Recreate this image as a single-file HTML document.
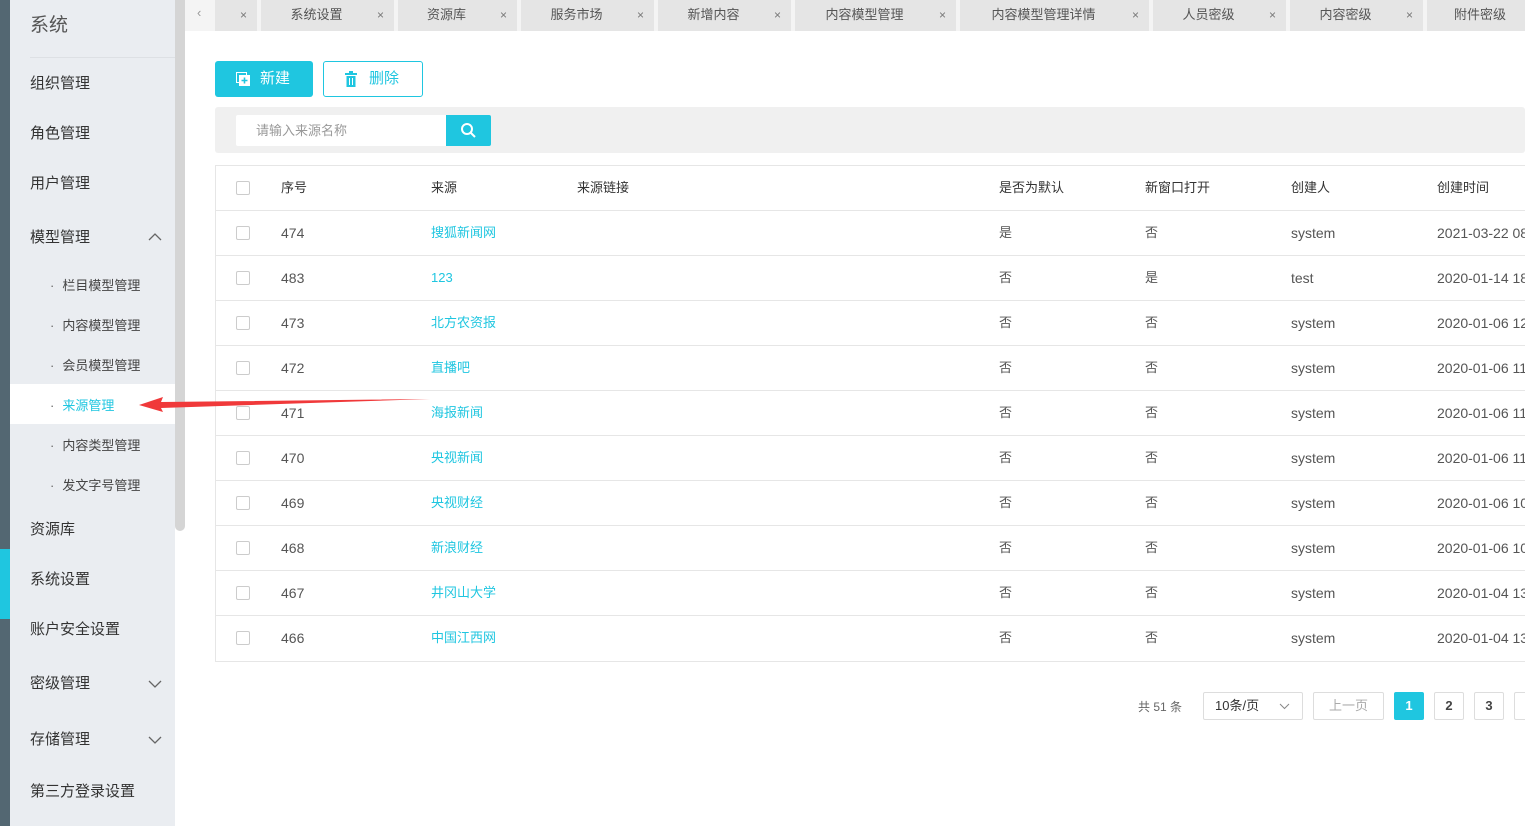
<!DOCTYPE html>
<html><head><meta charset="utf-8"><style>
*{margin:0;padding:0;box-sizing:border-box}
body{width:1525px;height:826px;overflow:hidden;background:#fff;font-family:"Liberation Sans","Noto Sans CJK SC",sans-serif;position:relative;color:#333}
.abs{position:absolute}
.side{left:0;top:0;width:10px;height:826px;background:#536772}
.panel{left:10px;top:0;width:165px;height:826px;background:#eaedf1}
.thumb{left:175px;top:0;width:10px;height:531px;background:#d5d5d5;border-radius:0 0 5px 5px}
.mi{position:absolute;left:30px;font-size:15px;color:#333}
.sub{position:absolute;left:50px;font-size:13px;color:#444}
.sub:before{content:"·";margin-right:8px;color:#666}
.tabs{left:185px;top:0;width:1340px;height:31px;background:#f4f4f4}
.tab{position:absolute;top:0;height:31px;background:#e5e5e5;font-size:13px;color:#555;line-height:30px;text-align:center}
.tab .x{position:absolute;right:10px;top:0;font-size:12px;color:#777}
.btn{position:absolute;top:61px;height:36px;border-radius:3px;font-size:15px;line-height:34px}
.th,.td{position:absolute;font-size:13px;height:20px;line-height:20px;white-space:nowrap}
.td{font-size:14px}
.cb{position:absolute;left:236px;width:14px;height:14px;border:1px solid #ccc;border-radius:2px;background:#fff}
.pg{position:absolute;top:692px;height:28px;border:1px solid #ddd;border-radius:2px;font-size:13px;text-align:center;line-height:26px}
</style></head><body>
<div class="abs side"></div>
<div class="abs" style="left:0;top:549px;width:10px;height:70px;background:#1fc6e0"></div>
<div class="abs panel"></div>
<div class="abs" style="left:30px;top:57px;width:145px;height:1px;background:#dde0e4"></div>
<div class="abs" style="left:10px;top:384px;width:165px;height:40px;background:#fff"></div>
<div class="abs thumb"></div>
<div class="mi" style="top:10px;font-size:19px;color:#555">系统</div>
<div class="mi" style="top:72px">组织管理</div>
<div class="mi" style="top:122px">角色管理</div>
<div class="mi" style="top:172px">用户管理</div>
<div class="mi" style="top:226px">模型管理</div>
<svg class="abs" style="left:148px;top:232px" width="14" height="9"><path d="M1 8L7 2L13 8" fill="none" stroke="#666" stroke-width="1.3"/></svg>
<div class="sub" style="top:275px">栏目模型管理</div>
<div class="sub" style="top:315px">内容模型管理</div>
<div class="sub" style="top:355px">会员模型管理</div>
<div class="sub" style="top:395px;color:#1fc6e0">来源管理</div>
<div class="sub" style="top:435px">内容类型管理</div>
<div class="sub" style="top:475px">发文字号管理</div>
<div class="mi" style="top:518px">资源库</div>
<div class="mi" style="top:568px">系统设置</div>
<div class="mi" style="top:618px">账户安全设置</div>
<div class="mi" style="top:672px">密级管理</div>
<svg class="abs" style="left:148px;top:680px" width="14" height="9"><path d="M1 1L7 7L13 1" fill="none" stroke="#666" stroke-width="1.3"/></svg>
<div class="mi" style="top:728px">存储管理</div>
<svg class="abs" style="left:148px;top:736px" width="14" height="9"><path d="M1 1L7 7L13 1" fill="none" stroke="#666" stroke-width="1.3"/></svg>
<div class="mi" style="top:780px">第三方登录设置</div>

<div class="abs tabs"></div>
<div class="abs" style="left:197px;top:5px;font-size:13px;color:#999">‹</div>
<div class="tab" style="left:215px;width:42px"><span class="x">×</span></div>
<div class="tab" style="left:261px;width:133px;padding-right:22px">系统设置<span class="x">×</span></div>
<div class="tab" style="left:398px;width:119px;padding-right:22px">资源库<span class="x">×</span></div>
<div class="tab" style="left:521px;width:133px;padding-right:22px">服务市场<span class="x">×</span></div>
<div class="tab" style="left:658px;width:133px;padding-right:22px">新增内容<span class="x">×</span></div>
<div class="tab" style="left:795px;width:161px;padding-right:22px">内容模型管理<span class="x">×</span></div>
<div class="tab" style="left:960px;width:189px;padding-right:22px">内容模型管理详情<span class="x">×</span></div>
<div class="tab" style="left:1153px;width:133px;padding-right:22px">人员密级<span class="x">×</span></div>
<div class="tab" style="left:1290px;width:133px;padding-right:22px">内容密级<span class="x">×</span></div>
<div class="tab" style="left:1427px;width:120px;text-align:left;padding-left:27px">附件密级</div>

<div class="btn" style="left:215px;width:98px;background:#1fc6e0;color:#fff;padding-left:45px;line-height:36px">新建</div>
<svg class="abs" style="left:236px;top:72px" width="14" height="14"><rect x="0.5" y="0.5" width="10" height="10" fill="none" stroke="#fff"/><rect x="3" y="3" width="11" height="11" fill="#fff"/><path d="M8.5 5.5v6M5.5 8.5h6" stroke="#1fc6e0" stroke-width="1.6"/></svg>
<div class="btn" style="left:323px;width:100px;border:1px solid #1fc6e0;color:#1fc6e0;padding-left:45px">删除</div>
<svg class="abs" style="left:345px;top:71px" width="12" height="16"><rect x="0" y="2" width="12" height="2" fill="#1fc6e0"/><rect x="4" y="0" width="4" height="2" fill="#1fc6e0"/><rect x="1.5" y="5" width="9" height="11" fill="#1fc6e0"/><path d="M4.5 7v7M7.5 7v7" stroke="#fff"/></svg>

<div class="abs" style="left:215px;top:107px;width:1310px;height:46px;background:#f0f0f0;border-radius:3px"></div>
<div class="abs" style="left:236px;top:115px;width:210px;height:31px;background:#fff;font-size:13px;color:#999;line-height:31px;padding-left:20px;border-radius:2px 0 0 2px">请输入来源名称</div>
<div class="abs" style="left:446px;top:115px;width:45px;height:31px;background:#1fc6e0;border-radius:0 2px 2px 0"></div>
<svg class="abs" style="left:460px;top:122px" width="17" height="17"><circle cx="7" cy="7" r="5" fill="none" stroke="#fff" stroke-width="2"/><path d="M10.5 10.5L15 15" stroke="#fff" stroke-width="2"/></svg>

<div class="abs" style="left:215px;top:165px;width:1320px;height:497px;border:1px solid #e6e6e6"></div>
<div class="cb" style="top:181px"></div>
<div class="th" style="left:281px;top:178px">序号</div>
<div class="th" style="left:431px;top:178px">来源</div>
<div class="th" style="left:577px;top:178px">来源链接</div>
<div class="th" style="left:999px;top:178px">是否为默认</div>
<div class="th" style="left:1145px;top:178px">新窗口打开</div>
<div class="th" style="left:1291px;top:178px">创建人</div>
<div class="th" style="left:1437px;top:178px">创建时间</div>
<div id="rows"></div>
<script>
var d=[["474","搜狐新闻网","是","否","system","2021-03-22 08"],["483","123","否","是","test","2020-01-14 18"],["473","北方农资报","否","否","system","2020-01-06 12"],["472","直播吧","否","否","system","2020-01-06 11"],["471","海报新闻","否","否","system","2020-01-06 11"],["470","央视新闻","否","否","system","2020-01-06 11"],["469","央视财经","否","否","system","2020-01-06 10"],["468","新浪财经","否","否","system","2020-01-06 10"],["467","井冈山大学","否","否","system","2020-01-04 13"],["466","中国江西网","否","否","system","2020-01-04 13"]];
var h="";d.forEach(function(r,i){var y=210+i*45;
h+='<div class="abs" style="left:216px;top:'+y+'px;width:1309px;height:1px;background:#e6e6e6"></div>';
var t=y+13;
h+='<div class="cb" style="top:'+(t+3)+'px"></div><div class="td" style="left:281px;top:'+t+'px;color:#555">'+r[0]+'</div><div class="td" style="left:431px;top:'+t+'px;color:#1fc6e0;font-size:13px">'+r[1]+'</div><div class="td" style="left:999px;top:'+t+'px;color:#555;font-size:13px">'+r[2]+'</div><div class="td" style="left:1145px;top:'+t+'px;color:#555;font-size:13px">'+r[3]+'</div><div class="td" style="left:1291px;top:'+t+'px;color:#555">'+r[4]+'</div><div class="td" style="left:1437px;top:'+t+'px;color:#555">'+r[5]+'</div>';});
document.getElementById("rows").innerHTML=h;
</script>
<svg class="abs" style="left:137px;top:395px" width="295" height="20"><path d="M293 4L24 7L26 2L2 10L26 17L24 13Z" fill="#f0393a"/></svg>

<div class="abs" style="left:1138px;top:698px;font-size:12px;color:#666">共 51 条</div>
<div class="pg" style="left:1203px;width:100px;text-align:left;padding-left:11px;color:#333">10条/页<svg style="position:absolute;right:12px;top:10px" width="11" height="7"><path d="M1 1L5.5 5.5L10 1" fill="none" stroke="#888"/></svg></div>
<div class="pg" style="left:1313px;width:71px;color:#aaa">上一页</div>
<div class="pg" style="left:1394px;width:30px;background:#1fc6e0;border-color:#1fc6e0;color:#fff;font-weight:bold">1</div>
<div class="pg" style="left:1434px;width:30px;color:#444;font-weight:bold">2</div>
<div class="pg" style="left:1474px;width:30px;color:#444;font-weight:bold">3</div>
<div class="pg" style="left:1514px;width:30px"></div>
</body></html>
